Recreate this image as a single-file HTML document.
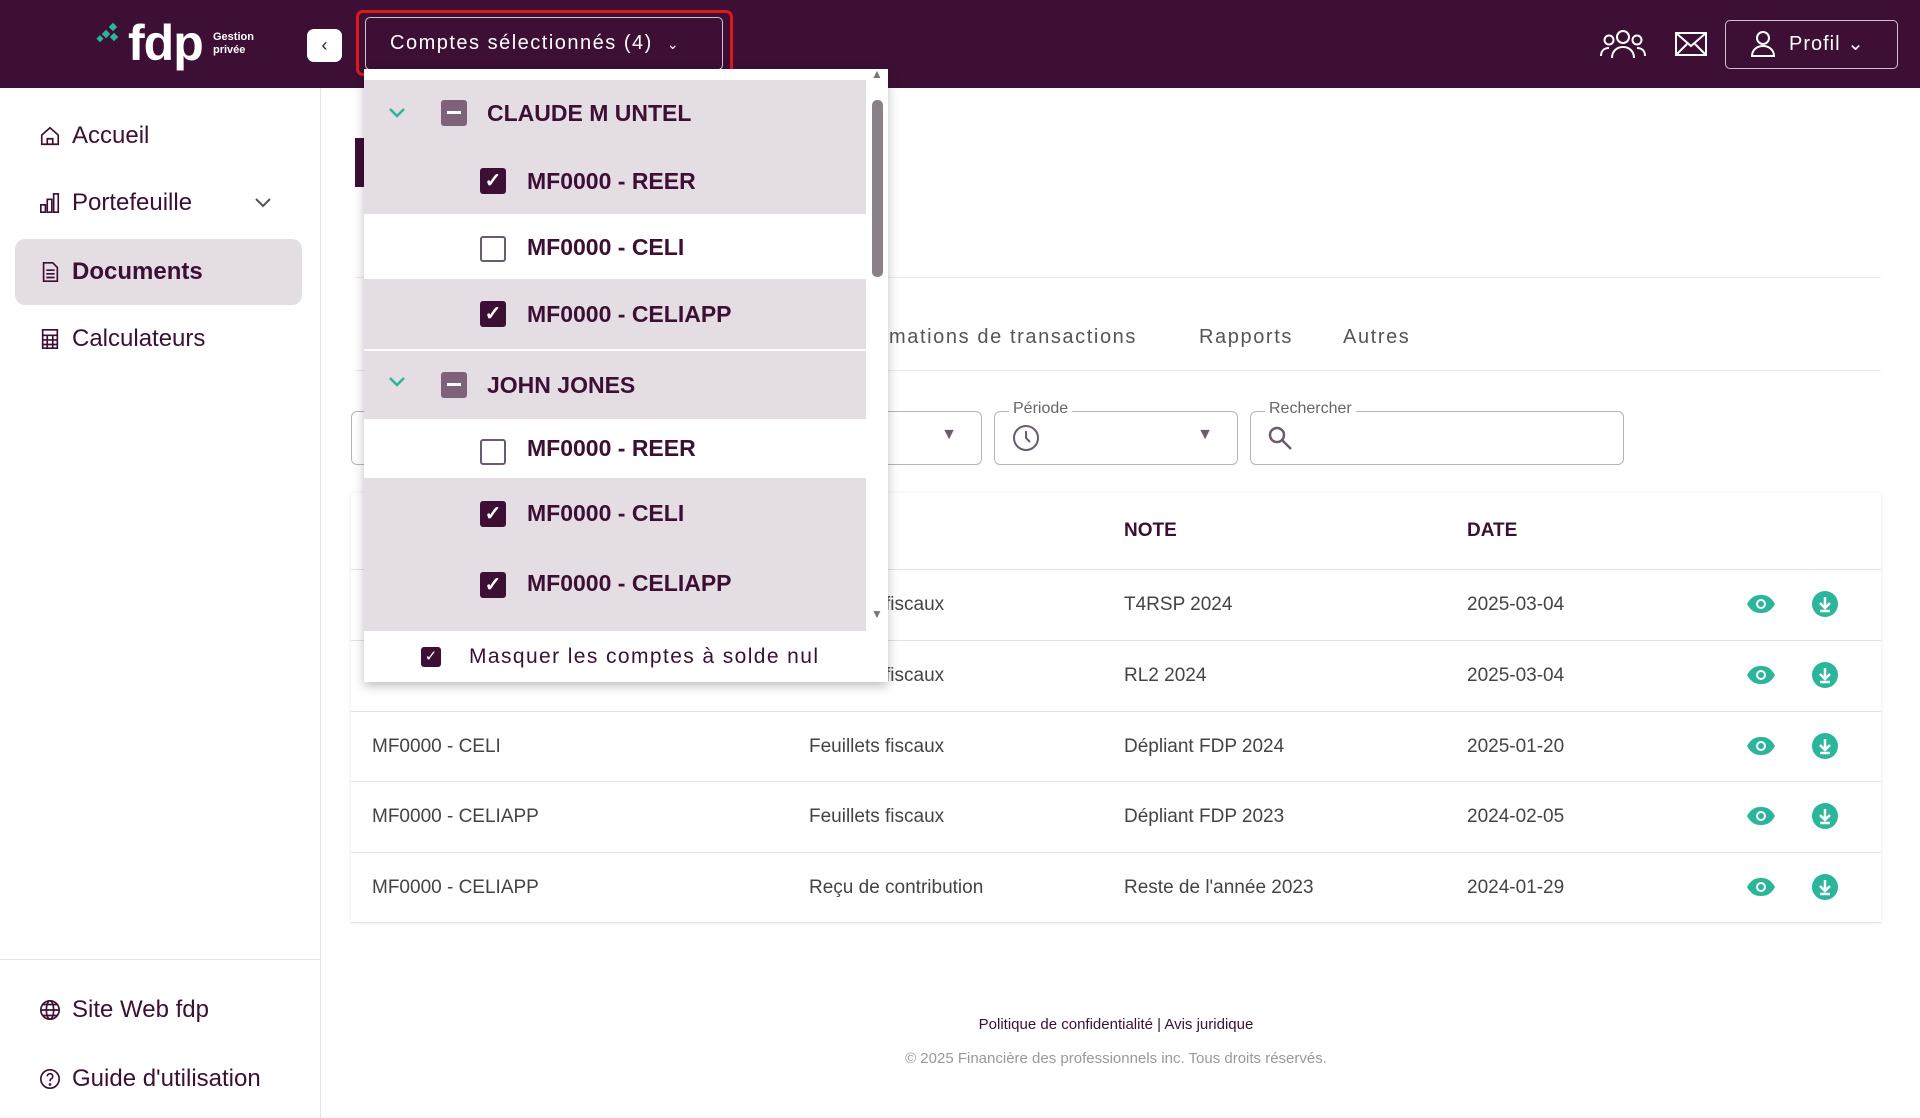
<!DOCTYPE html>
<html><head><meta charset="utf-8"><style>
*{box-sizing:border-box;margin:0;padding:0}
body{width:1920px;height:1118px;overflow:hidden;background:#fff;font-family:"Liberation Sans",sans-serif;color:#3a1f36;position:relative}
.abs{position:absolute}
.hdr{left:0;top:0;width:1920px;height:88px;background:#3d0f35}
.side{left:0;top:88px;width:321px;height:1030px;border-right:1px solid #e6e1e5;background:#fff}
.nav{position:absolute;left:39px;font-size:24px;color:#3d0f35;display:flex;align-items:center;gap:11px}
.nav svg{width:22px;height:22px}
.tab{position:absolute;top:326px;font-size:20px;color:#555;letter-spacing:1.6px}
.fld{position:absolute;top:411px;height:54px;border:1.5px solid #bdb0ba;border-radius:6px}
.lbl{position:absolute;top:-12px;left:14px;background:#fff;padding:0 4px;font-size:16px;color:#666}
.row{position:absolute;left:351px;width:1530px;height:71px;border-top:1.5px solid #e4e0e3;font-size:19px;color:#444}
.row span{position:absolute;top:24px}
.dd{left:364px;top:69px;width:524px;height:613px;background:#fff;box-shadow:0 4px 10px rgba(0,0,0,.25)}
.it{position:absolute;left:0;width:502px;font-weight:bold;font-size:23px;color:#3d0f35}
.g{background:#e4dde3}
.cb{position:absolute;width:26px;height:26px;border-radius:3px}
.on{background:#3d0f35}
.off{border:2px solid #6e5a6c;background:#fff}
.mid{background:#7e6279}
.chev{position:absolute;left:24px;width:18px;height:12px}
</style></head><body>
<div class="abs hdr"></div>
<div class="abs" style="left:96px;top:22px;width:24px;height:24px">
<svg width="30" height="30" viewBox="0 0 30 30"><g fill="#2bb59a"><rect x="14" y="2" width="6" height="6" transform="rotate(45 17 5)"/><rect x="7" y="9" width="6" height="6" transform="rotate(45 10 12)"/><rect x="15" y="12" width="6" height="6" transform="rotate(45 18 15)"/><rect x="2" y="14" width="5" height="5" transform="rotate(45 4 16)"/></g></svg></div>
<div class="abs" style="left:128px;top:14px;font-size:50px;color:#fff;font-weight:bold;letter-spacing:-1px">fdp</div>
<div class="abs" style="left:213px;top:31px;font-size:11px;color:#fff;font-weight:bold;line-height:13px">Gestion<br>privée</div>
<div class="abs" style="left:307px;top:29px;width:35px;height:33px;background:#fff;border-radius:7px;text-align:center;line-height:33px;color:#3d0f35;font-size:18px">‹</div>
<div class="abs" style="left:356px;top:10px;width:377px;height:66px;border:3px solid #e0161d;border-radius:7px"></div>
<div class="abs" style="left:365px;top:17px;width:358px;height:53px;border:1.5px solid #cfc2cc;border-radius:5px;color:#fff;font-size:20px;letter-spacing:1.5px;line-height:50px;padding-left:24px">Comptes sélectionnés (4) &nbsp;<span style="font-size:14px">⌄</span></div>
<svg class="abs" style="left:1600px;top:28px" width="46" height="32" viewBox="0 0 46 32" fill="none" stroke="#fff" stroke-width="2"><circle cx="23" cy="9" r="6"/><path d="M12 30c0-7 5-11 11-11s11 4 11 11"/><circle cx="9" cy="12" r="4.5"/><path d="M1 28c0-5 3-8 8-8"/><circle cx="37" cy="12" r="4.5"/><path d="M45 28c0-5-3-8-8-8"/></svg>
<svg class="abs" style="left:1675px;top:32px" width="32" height="24" viewBox="0 0 32 24" fill="none" stroke="#fff" stroke-width="2"><rect x="1" y="1" width="30" height="22"/><path d="M1 1l15 13L31 1M1 23l11-11M31 23L20 12"/></svg>
<div class="abs" style="left:1725px;top:20px;width:173px;height:49px;border:1.5px solid #cfc2cc;border-radius:5px;color:#fff;font-size:20px;letter-spacing:1px;line-height:46px;padding-left:63px">Profil ⌄</div>
<svg class="abs" style="left:1751px;top:31px" width="24" height="26" viewBox="0 0 24 26" fill="none" stroke="#fff" stroke-width="2"><circle cx="12" cy="7" r="6"/><path d="M1 25c0-6 5-10 11-10s11 4 11 10z"/></svg>

<div class="abs side"></div>
<div class="abs" style="left:15px;top:239px;width:287px;height:66px;background:#e4dde3;border-radius:10px"></div>
<div class="nav" style="top:122px"><svg viewBox="0 0 24 24" fill="none" stroke="#3d0f35" stroke-width="1.8"><path d="M3 11l9-8 9 8v10H3z"/><path d="M9 21v-6h6v6"/></svg>Accueil</div>
<div class="nav" style="top:189px"><svg viewBox="0 0 24 24" fill="none" stroke="#3d0f35" stroke-width="1.8"><rect x="2" y="14" width="5" height="8"/><rect x="9" y="8" width="5" height="14"/><rect x="16" y="2" width="5" height="20"/></svg>Portefeuille</div>
<svg class="abs" style="left:254px;top:197px" width="18" height="12" viewBox="0 0 18 12" fill="none" stroke="#555" stroke-width="2"><path d="M2 2l7 7 7-7"/></svg>
<div class="nav" style="top:258px;font-weight:bold"><svg viewBox="0 0 24 24" fill="none" stroke="#3d0f35" stroke-width="1.8"><path d="M5 2h10l5 5v15H5z"/><path d="M8 10h9M8 14h9M8 18h9"/></svg>Documents</div>
<div class="nav" style="top:325px"><svg viewBox="0 0 24 24" fill="none" stroke="#3d0f35" stroke-width="1.8"><rect x="4" y="2" width="16" height="20"/><path d="M4 8h16M9 8v14M15 8v14M4 13h16M4 18h16"/></svg>Calculateurs</div>
<div class="abs" style="left:0;top:959px;width:321px;border-top:1.5px solid #e6e1e5"></div>
<div class="nav" style="top:996px"><svg viewBox="0 0 24 24" fill="none" stroke="#3d0f35" stroke-width="1.8"><circle cx="12" cy="12" r="10"/><ellipse cx="12" cy="12" rx="4" ry="10"/><path d="M2 12h20M4 6h16M4 18h16"/></svg>Site Web fdp</div>
<div class="nav" style="top:1065px"><svg viewBox="0 0 24 24" fill="none" stroke="#3d0f35" stroke-width="1.8"><circle cx="12" cy="12" r="10"/><path d="M9 9a3 3 0 1 1 4 3c-1 .5-1 1.5-1 2.5"/><circle cx="12" cy="18" r=".6"/></svg>Guide d'utilisation</div>

<div class="abs" style="left:355px;top:138px;width:9px;height:49px;background:#3d0f35"></div>
<div class="abs" style="left:355px;top:277px;width:1526px;border-top:1.5px solid #ece8eb"></div>
<div class="tab" style="left:868px">ormations de transactions</div>
<div class="tab" style="left:1199px">Rapports</div>
<div class="tab" style="left:1343px">Autres</div>
<div class="abs" style="left:355px;top:370px;width:1526px;border-top:1.5px solid #ece8eb"></div>
<div class="fld" style="left:351px;width:631px"><span style="position:absolute;right:24px;top:14px;color:#6e5a6c;font-size:16px">▼</span></div>
<div class="fld" style="left:994px;width:244px"><span class="lbl">Période</span><svg style="position:absolute;left:17px;top:12px" width="28" height="28" viewBox="0 0 28 28" fill="none" stroke="#6e5a6c" stroke-width="2"><circle cx="14" cy="14" r="12"/><path d="M14 7v7l4 4"/></svg><span style="position:absolute;right:24px;top:14px;color:#6e5a6c;font-size:16px">▼</span></div>
<div class="fld" style="left:1250px;width:374px"><span class="lbl">Rechercher</span><svg style="position:absolute;left:16px;top:13px" width="26" height="26" viewBox="0 0 26 26" fill="none" stroke="#6e5a6c" stroke-width="2.5"><circle cx="10" cy="10" r="7"/><path d="M15 15l9 9"/></svg></div>

<div class="abs" style="left:351px;top:493px;width:1530px;height:430px;box-shadow:0 0 4px rgba(0,0,0,.08)"></div>
<div class="abs" style="left:1124px;top:520px;font-size:19px;color:#3d0f35;font-weight:bold">NOTE</div>
<div class="abs" style="left:1467px;top:520px;font-size:19px;color:#3d0f35;font-weight:bold">DATE</div>

<div class="row" style="top:569px"><span style="left:458px">Feuillets fiscaux</span><span style="left:773px">T4RSP 2024</span><span style="left:1116px">2025-03-04</span></div>
<div class="row" style="top:640px"><span style="left:458px">Feuillets fiscaux</span><span style="left:773px">RL2 2024</span><span style="left:1116px">2025-03-04</span></div>
<div class="row" style="top:711px"><span style="left:21px">MF0000 - CELI</span><span style="left:458px">Feuillets fiscaux</span><span style="left:773px">Dépliant FDP 2024</span><span style="left:1116px">2025-01-20</span></div>
<div class="row" style="top:781px"><span style="left:21px">MF0000 - CELIAPP</span><span style="left:458px">Feuillets fiscaux</span><span style="left:773px">Dépliant FDP 2023</span><span style="left:1116px">2024-02-05</span></div>
<div class="row" style="top:852px;border-bottom:1.5px solid #e4e0e3"><span style="left:21px">MF0000 - CELIAPP</span><span style="left:458px">Reçu de contribution</span><span style="left:773px">Reste de l'année 2023</span><span style="left:1116px">2024-01-29</span></div>

<svg width="0" height="0" style="position:absolute"><defs>
<g id="eye"><path d="M1 12C5 5 9 3 15 3s10 2 14 9c-4 7-8 9-14 9S5 19 1 12z" fill="#2bb59a"/><circle cx="15" cy="12" r="5" fill="#fff"/><circle cx="15" cy="12" r="3" fill="#2bb59a"/></g>
<g id="dl"><circle cx="13" cy="13" r="13" fill="#2bb59a"/><path d="M13 6v10M8 12l5 5 5-5M8 20h10" stroke="#fff" stroke-width="2.5" fill="none"/></g></defs></svg>
<svg class="abs" style="left:1746px;top:592px" width="30" height="24"><use href="#eye"/></svg>
<svg class="abs" style="left:1812px;top:591px" width="27" height="27"><use href="#dl"/></svg>
<svg class="abs" style="left:1746px;top:663px" width="30" height="24"><use href="#eye"/></svg>
<svg class="abs" style="left:1812px;top:662px" width="27" height="27"><use href="#dl"/></svg>
<svg class="abs" style="left:1746px;top:734px" width="30" height="24"><use href="#eye"/></svg>
<svg class="abs" style="left:1812px;top:733px" width="27" height="27"><use href="#dl"/></svg>
<svg class="abs" style="left:1746px;top:804px" width="30" height="24"><use href="#eye"/></svg>
<svg class="abs" style="left:1812px;top:803px" width="27" height="27"><use href="#dl"/></svg>
<svg class="abs" style="left:1746px;top:875px" width="30" height="24"><use href="#eye"/></svg>
<svg class="abs" style="left:1812px;top:874px" width="27" height="27"><use href="#dl"/></svg>

<div class="abs" style="left:351px;width:1530px;top:1016px;text-align:center;font-size:15px;color:#3d0f35">Politique de confidentialité | Avis juridique</div>
<div class="abs" style="left:351px;width:1530px;top:1050px;text-align:center;font-size:15px;color:#999">© 2025 Financière des professionnels inc. Tous droits réservés.</div>

<div class="abs dd">
<div class="it g" style="top:11px;height:67px"><svg class="chev" style="top:27px" viewBox="0 0 18 12" fill="none" stroke="#2bb59a" stroke-width="2.5"><path d="M2 2l7 7 7-7"/></svg><div class="cb mid" style="left:77px;top:20px"><div style="position:absolute;left:6px;top:11px;width:14px;height:3px;background:#fff"></div></div><span style="position:absolute;left:123px;top:20px">CLAUDE M UNTEL</span></div>
<div class="it g" style="top:78px;height:67px"><div class="cb on" style="left:116px;top:21px;color:#fff;font-size:20px;text-align:center;line-height:26px">✓</div><span style="position:absolute;left:163px;top:21px">MF0000 - REER</span></div>
<div class="it" style="top:145px;height:65px;background:#fff"><div class="cb off" style="left:116px;top:22px"></div><span style="position:absolute;left:163px;top:20px">MF0000 - CELI</span></div>
<div class="it g" style="top:210px;height:70px"><div class="cb on" style="left:116px;top:22px;color:#fff;font-size:20px;text-align:center;line-height:26px">✓</div><span style="position:absolute;left:163px;top:22px">MF0000 - CELIAPP</span></div>
<div class="it g" style="top:282px;height:68px"><svg class="chev" style="top:25px" viewBox="0 0 18 12" fill="none" stroke="#2bb59a" stroke-width="2.5"><path d="M2 2l7 7 7-7"/></svg><div class="cb mid" style="left:77px;top:21px"><div style="position:absolute;left:6px;top:11px;width:14px;height:3px;background:#fff"></div></div><span style="position:absolute;left:123px;top:21px">JOHN JONES</span></div>
<div class="it" style="top:350px;height:59px;background:#fff"><div class="cb off" style="left:116px;top:20px"></div><span style="position:absolute;left:163px;top:16px">MF0000 - REER</span></div>
<div class="it g" style="top:409px;height:153px"><div class="cb on" style="left:116px;top:23px;color:#fff;font-size:20px;text-align:center;line-height:26px">✓</div><span style="position:absolute;left:163px;top:22px">MF0000 - CELI</span><div class="cb on" style="left:116px;top:94px;color:#fff;font-size:20px;text-align:center;line-height:26px">✓</div><span style="position:absolute;left:163px;top:92px">MF0000 - CELIAPP</span></div>
<div class="abs" style="left:504px;top:11px;width:20px;height:551px;background:#fff"></div>
<div class="abs" style="left:508px;top:31px;width:11px;height:177px;background:#8a8088;border-radius:5px"></div>
<div class="abs" style="left:507px;top:-2px;font-size:12px;color:#777">▲</div>
<div class="abs" style="left:507px;top:538px;font-size:12px;color:#777">▼</div>
<div class="cb on" style="left:57px;top:578px;width:20px;height:20px;color:#fff;font-size:15px;text-align:center;line-height:20px">✓</div>
<div class="abs" style="left:105px;top:576px;font-size:21px;color:#3d0f35;letter-spacing:1.4px">Masquer les comptes à solde nul</div>
</div>
</body></html>
